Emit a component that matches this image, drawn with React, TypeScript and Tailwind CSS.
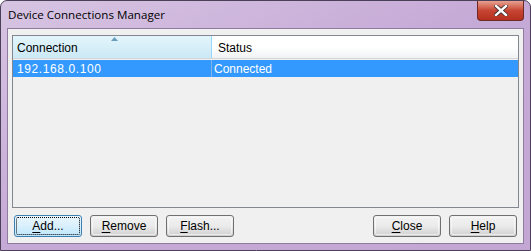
import React from "react";

function Btn({ u, rest, focused = false }: { u: string; rest: string; focused?: boolean }) {
  return (
    <div
      className={
        "w-[68px] h-[22px] rounded-[3px] border flex items-center justify-center text-[12px] text-black " +
        (focused
          ? "border-[#3c7fb1] bg-gradient-to-b from-[#eaf6fd] via-[#d9f0fc] to-[#bee6fd]"
          : "border-[#707070] bg-gradient-to-b from-[#f2f2f2] via-[#ebebeb] to-[#cfcfcf]")
      }
    >
      <div
        className={
          "w-[64px] h-[18px] flex items-center justify-center rounded-[2px] " +
          (focused ? "border border-dotted border-black" : "border border-[#fcfcfc]/60")
        }
      >
        <span>
          <span className="underline underline-offset-[2px]">{u}</span>
          {rest}
        </span>
      </div>
    </div>
  );
}

export default function App() {
  return (
    <div
      className="w-[531px] h-[251px] flex flex-col rounded-t-[7px] border border-[#4a4158] bg-gradient-to-br from-[#d7c4e2] via-[#c5a9d6] to-[#c3a6d3]"
      style={{ fontFamily: "'Liberation Sans', Arial, sans-serif" }}
    >
      <div className="h-[27px] flex items-start justify-between pl-[7px] pr-[6px]">
        <div className="pt-[5px] text-[11.6px] text-black" style={{ fontFamily: "'Open Sans', 'Noto Sans', sans-serif" }}>
          Device Connections Manager
        </div>
        <div className="w-[47px] h-[20px] rounded-b-[4px] border border-t-0 border-[#6b2a22] bg-gradient-to-b from-[#e6a090] via-[#c74532] to-[#b5301e] flex items-center justify-center">
          <svg width="14" height="11" viewBox="0 0 14 11">
            <path d="M2 1 L12 10 M12 1 L2 10" stroke="#3a2a2a" strokeWidth="4" strokeLinecap="square" />
            <path d="M2 1 L12 10 M12 1 L2 10" stroke="#ffffff" strokeWidth="2.4" strokeLinecap="square" />
          </svg>
        </div>
      </div>
      <div className="flex-1 mx-[6px] mb-[6px] border border-[#8f7ca0] bg-[#f0f0f0] flex flex-col px-[4px] pt-[6px] pb-[6px]">
        <div className="h-[173px] border border-[#828790] bg-[#f0f0f0] flex flex-col">
          <div className="h-[23px] flex border-b border-[#d5d5d5] bg-white">
            <div className="relative w-[199px] h-full border-r border-[#96d9f9] bg-gradient-to-b from-[#e3f5fc] to-[#cbe9f6] flex items-center pl-[4px] pt-[2px] text-[12px] text-black">
              Connection
              <svg className="absolute left-[98px] top-[1px]" width="7" height="4" viewBox="0 0 7 4">
                <path d="M0 4 L3.5 0 L7 4 Z" fill="#6a9cbd" />
              </svg>
            </div>
            <div className="flex-1 h-full bg-gradient-to-b from-white via-white to-[#f1f2f4] flex items-center pl-[6px] pt-[2px] text-[12px] text-black">
              Status
            </div>
          </div>
          <div className="mt-[1px] h-[17px] flex bg-[#3399ff] text-white text-[12px]">
            <div className="w-[199px] pl-[4px] flex items-center border-r border-[#80b4e8] tracking-[0.6px]">192.168.0.100</div>
            <div className="flex-1 pl-[2px] flex items-center">Connected</div>
          </div>
        </div>
        <div className="mt-auto flex items-center">
          <div className="ml-[2px] flex gap-[8px]">
            <Btn u="A" rest="dd..." focused />
            <Btn u="R" rest="emove" />
            <Btn u="F" rest="lash..." />
          </div>
          <div className="ml-auto mr-[2px] flex gap-[8px]">
            <Btn u="C" rest="lose" />
            <Btn u="H" rest="elp" />
          </div>
        </div>
      </div>
    </div>
  );
}
